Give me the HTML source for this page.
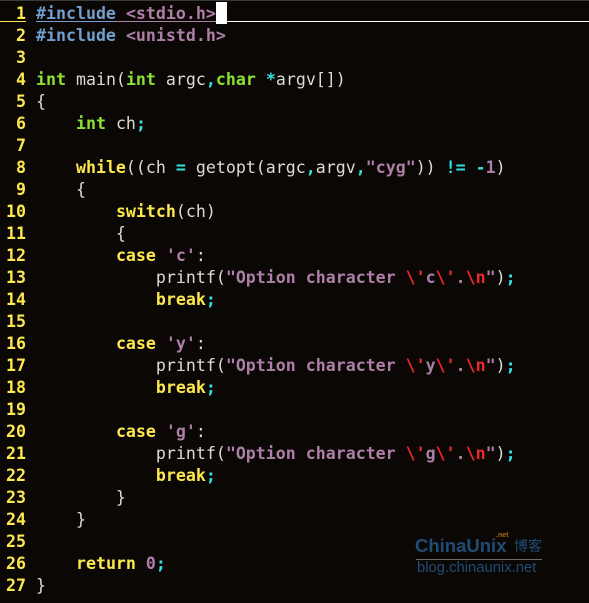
<!DOCTYPE html>
<html><head><meta charset="utf-8"><style>
html,body{margin:0;padding:0;}
body{width:589px;height:603px;background:#0b0705;position:relative;overflow:hidden;font-family:"DejaVu Sans Mono","Liberation Mono",monospace;font-size:16.6px;color:#dcdcd6;}
.top{position:absolute;left:0;top:0;width:589px;height:1px;background:#3a3a3a;}
.l{position:absolute;left:0;height:22px;line-height:22px;white-space:pre;}
.n{position:absolute;left:0;width:26px;text-align:right;color:#fce94f;font-weight:bold;}
.c{position:absolute;left:36px;}
.pp{color:#729fcf;font-weight:bold}
.inc{color:#ad7fa8;font-weight:bold}
.ty{color:#8ae234;font-weight:bold}
.kw{color:#fce94f;font-weight:bold}
.st{color:#ad7fa8;font-weight:bold}
.es{color:#ef2929;font-weight:bold}
.op{color:#34e2e2;font-weight:bold}
.wm{position:absolute;font-family:"Liberation Sans","Noto Sans CJK SC",sans-serif;line-height:1;}
</style></head><body>
<div class="top"></div>
<div style="position:absolute;left:0;top:21px;width:26px;height:1px;background:#fce94f"></div>
<div style="position:absolute;left:36px;top:21px;width:80px;height:1px;background:#729fcf"></div>
<div style="position:absolute;left:116px;top:21px;width:100px;height:1px;background:#ad7fa8"></div>
<div style="position:absolute;left:226px;top:21px;width:363px;height:1px;background:#fff"></div>
<div style="position:absolute;left:216px;top:2px;width:11px;height:22px;background:#fff"></div>

<div class="l" style="top:3px"><span class="n">1</span><span class="c"><span class="pp">#include</span> <span class="inc">&lt;stdio.h&gt;</span></span></div>
<div class="l" style="top:25px"><span class="n">2</span><span class="c"><span class="pp">#include</span> <span class="inc">&lt;unistd.h&gt;</span></span></div>
<div class="l" style="top:47px"><span class="n">3</span></div>
<div class="l" style="top:69px"><span class="n">4</span><span class="c"><span class="ty">int</span> main(<span class="ty">int</span> argc<span class="op">,</span><span class="ty">char</span> <span class="op">*</span>argv[])</span></div>
<div class="l" style="top:91px"><span class="n">5</span><span class="c">{</span></div>
<div class="l" style="top:113px"><span class="n">6</span><span class="c">    <span class="ty">int</span> ch<span class="op">;</span></span></div>
<div class="l" style="top:135px"><span class="n">7</span></div>
<div class="l" style="top:157px"><span class="n">8</span><span class="c">    <span class="kw">while</span>((ch <span class="op">=</span> getopt(argc<span class="op">,</span>argv<span class="op">,</span><span class="st">"cyg"</span>)) <span class="op">!=</span> <span class="op">-</span><span class="st">1</span>)</span></div>
<div class="l" style="top:179px"><span class="n">9</span><span class="c">    {</span></div>
<div class="l" style="top:201px"><span class="n">10</span><span class="c">        <span class="kw">switch</span>(ch)</span></div>
<div class="l" style="top:223px"><span class="n">11</span><span class="c">        {</span></div>
<div class="l" style="top:245px"><span class="n">12</span><span class="c">        <span class="kw">case</span> <span class="st">'c'</span>:</span></div>
<div class="l" style="top:267px"><span class="n">13</span><span class="c">            printf(<span class="st">"Option character </span><span class="es">\'</span><span class="st">c</span><span class="es">\'</span><span class="st">.</span><span class="es">\n</span><span class="st">"</span>)<span class="op">;</span></span></div>
<div class="l" style="top:289px"><span class="n">14</span><span class="c">            <span class="kw">break</span><span class="op">;</span></span></div>
<div class="l" style="top:311px"><span class="n">15</span></div>
<div class="l" style="top:333px"><span class="n">16</span><span class="c">        <span class="kw">case</span> <span class="st">'y'</span>:</span></div>
<div class="l" style="top:355px"><span class="n">17</span><span class="c">            printf(<span class="st">"Option character </span><span class="es">\'</span><span class="st">y</span><span class="es">\'</span><span class="st">.</span><span class="es">\n</span><span class="st">"</span>)<span class="op">;</span></span></div>
<div class="l" style="top:377px"><span class="n">18</span><span class="c">            <span class="kw">break</span><span class="op">;</span></span></div>
<div class="l" style="top:399px"><span class="n">19</span></div>
<div class="l" style="top:421px"><span class="n">20</span><span class="c">        <span class="kw">case</span> <span class="st">'g'</span>:</span></div>
<div class="l" style="top:443px"><span class="n">21</span><span class="c">            printf(<span class="st">"Option character </span><span class="es">\'</span><span class="st">g</span><span class="es">\'</span><span class="st">.</span><span class="es">\n</span><span class="st">"</span>)<span class="op">;</span></span></div>
<div class="l" style="top:465px"><span class="n">22</span><span class="c">            <span class="kw">break</span><span class="op">;</span></span></div>
<div class="l" style="top:487px"><span class="n">23</span><span class="c">        }</span></div>
<div class="l" style="top:509px"><span class="n">24</span><span class="c">    }</span></div>
<div class="l" style="top:531px"><span class="n">25</span></div>
<div class="l" style="top:553px"><span class="n">26</span><span class="c">    <span class="kw">return</span> <span class="st">0</span><span class="op">;</span></span></div>
<div class="l" style="top:575px"><span class="n">27</span><span class="c">}</span></div>

<div class="wm" style="left:415px;top:537px;font-size:18.5px;font-weight:bold;color:#1f4c75">ChinaUnix</div>
<div class="wm" style="left:496px;top:532px;font-size:7px;font-weight:bold;color:#a06a20">.net</div>
<div class="wm" style="left:514px;top:539px;font-size:14px;color:#1f4c75">博客</div>
<div style="position:absolute;left:416px;top:559px;width:126px;height:1px;background:#6a6a6a"></div>
<div class="wm" style="left:417px;top:561px;font-size:14.8px;color:#1f4c75">blog.chinaunix.net</div>
</body></html>
